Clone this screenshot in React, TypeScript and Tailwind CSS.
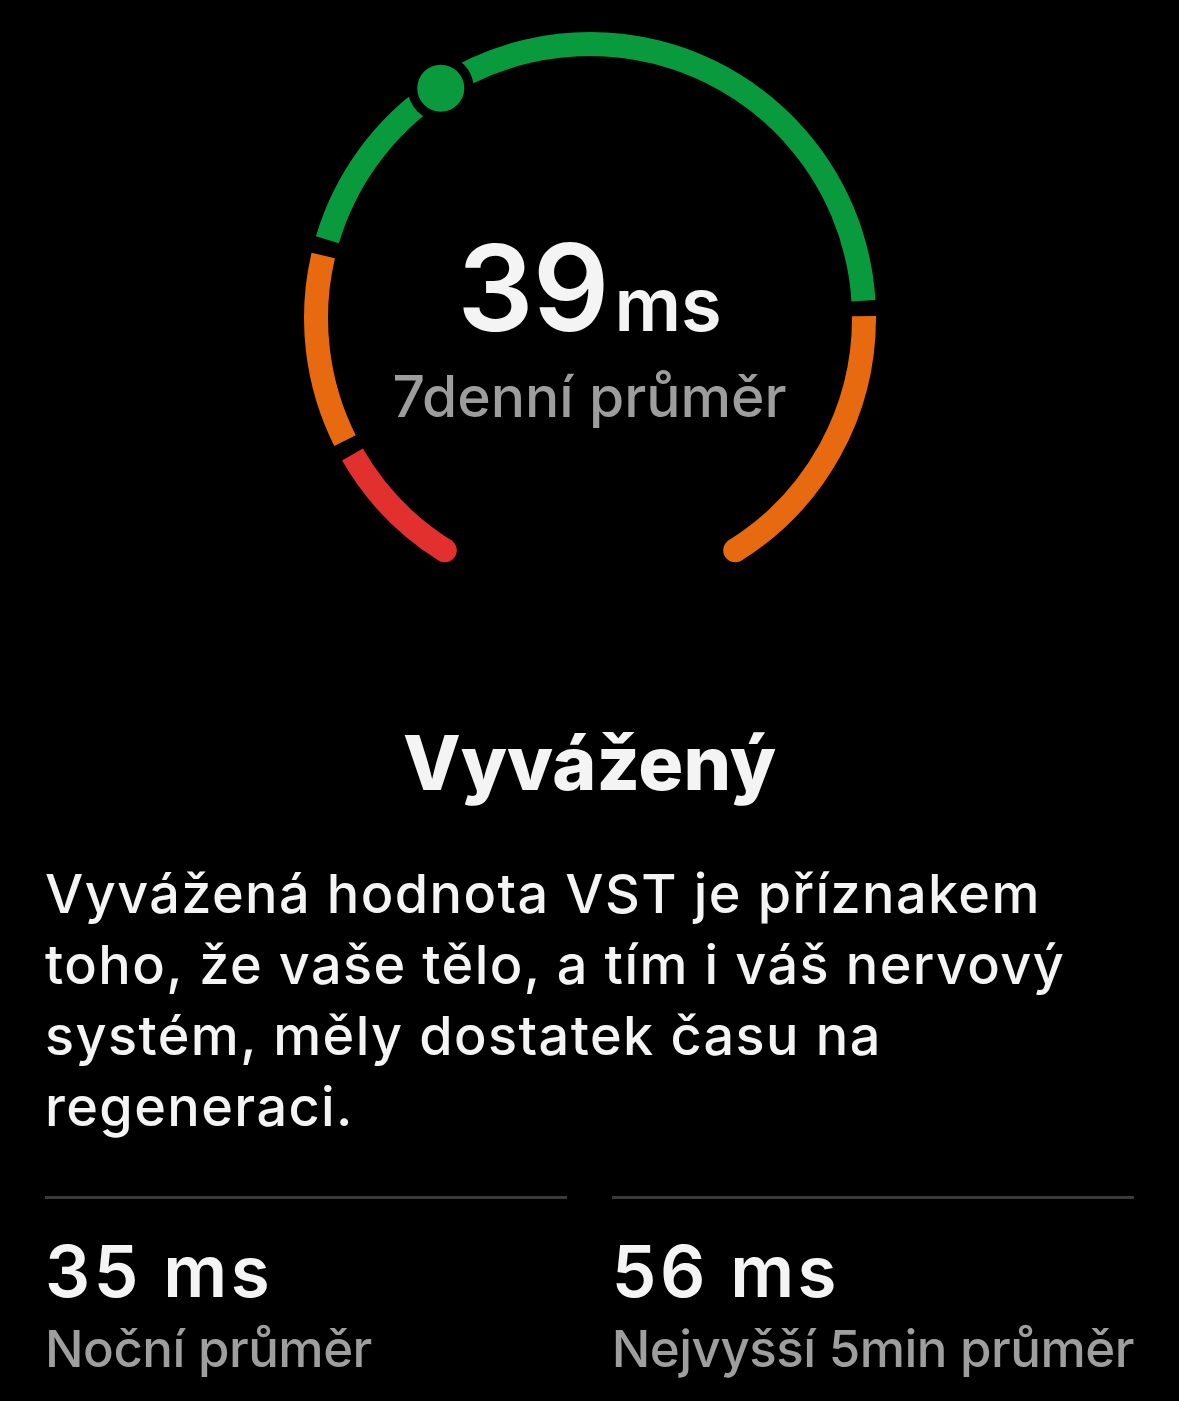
const CX = 300;
const CY = 318;
const R = 274;

const GREEN = '#0a9a3e';
const ORANGE = '#e86a10';
const RED = '#e2302f';

function pt(deg: number) {
  const a = (deg * Math.PI) / 180;
  return [CX + R * Math.cos(a), CY + R * Math.sin(a)];
}

function arc(from: number, to: number) {
  const [x1, y1] = pt(from);
  const [x2, y2] = pt(to);
  const large = to - from > 180 ? 1 : 0;
  return `M ${x1} ${y1} A ${R} ${R} 0 ${large} 1 ${x2} ${y2}`;
}

const segments = [
  { from: 122, to: 150.1, color: RED },
  { from: 153.4, to: 193.2, color: ORANGE },
  { from: 196.6, to: 356.4, color: GREEN },
  { from: 359.6, to: 418, color: ORANGE },
];

const lines = [
  'Vyvážená hodnota VST je příznakem',
  'toho, že vaše tělo, a tím i váš nervový',
  'systém, měly dostatek času na',
  'regeneraci.',
];

function Gauge() {
  const [sx, sy] = pt(122);
  const [ex, ey] = pt(418);
  const [dx, dy] = pt(237);
  return (
    <svg width="600" height="580" viewBox="0 0 600 580" className="block">
      {segments.map((s, i) => (
        <path key={i} d={arc(s.from, s.to)} fill="none" stroke={s.color} strokeWidth="24" />
      ))}
      <circle cx={sx} cy={sy} r="12" fill={RED} />
      <circle cx={ex} cy={ey} r="12" fill={ORANGE} />
      {/* current value marker */}
      <circle cx={dx} cy={dy} r="33" fill="#000" />
      <circle cx={dx} cy={dy} r="23.5" fill={GREEN} />
    </svg>
  );
}

function Stat({ value, label }: { value: string; label: string }) {
  return (
    <div className="flex-1">
      <div className="h-[3px] bg-[#3b3b3d]" />
      <div className="mt-[37px] text-[71px] leading-[71px] font-semibold text-[#f4f4f4] tracking-[3.5px]">{value}</div>
      <div className="mt-[16px] text-[51px] leading-[51px] font-medium text-[#9e9e9e] whitespace-nowrap tracking-[-0.5px]">{label}</div>
    </div>
  );
}

export default function App() {
  return (
    <div className="min-h-screen bg-black font-['Inter',sans-serif] text-white">
      <div className="relative mx-auto w-[600px]">
        <Gauge />
        <div className="absolute inset-x-0 top-[228px] flex flex-col items-center">
          <div className="flex items-baseline text-[#f4f4f4] font-semibold">
            <span className="text-[120px] leading-[120px] tracking-[-1px]">39</span>
            <span className="text-[74px] leading-[74px] ml-[6px]">ms</span>
          </div>
          <div className="mt-[20px] text-[57px] leading-[57px] font-medium text-[#9d9d9d]">
            7denní průměr
          </div>
        </div>
      </div>

      <h1 className="mt-[145px] text-center text-[75px] leading-[75px] font-extrabold text-[#f4f4f4]">
        Vyvážený
      </h1>

      <p className="mt-[58px] px-[45px] text-[54px] leading-[71px] font-medium text-[#f4f4f4] tracking-[1.4px]">
        {lines.map((l, i) => (
          <span key={i} className="block whitespace-nowrap">
            {l}
          </span>
        ))}
      </p>

      <div className="mt-[54px] px-[45px] flex gap-[45px] pb-[30px]">
        <Stat value="35 ms" label="Noční průměr" />
        <Stat value="56 ms" label="Nejvyšší 5min průměr" />
      </div>
    </div>
  );
}
